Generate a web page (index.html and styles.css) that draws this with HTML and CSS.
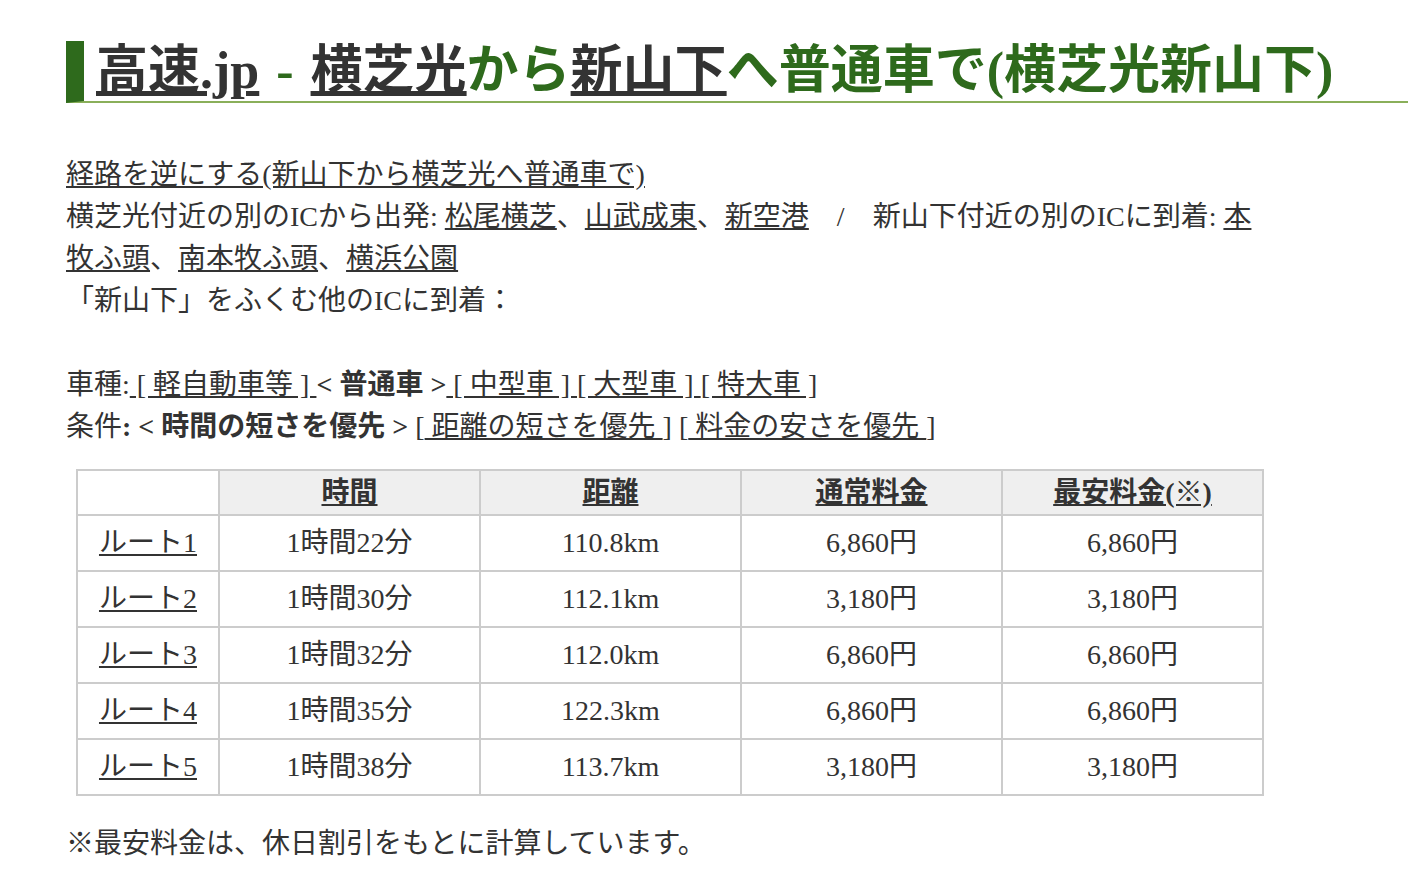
FILE: index.html
```html
<!DOCTYPE html>
<html lang="ja">
<head>
<meta charset="utf-8">
<title>高速.jp - 横芝光から新山下へ普通車で</title>
<link rel="stylesheet" href="styles.css">
</head>
<body>
<div class="page">
  <h1 class="title"><a href="#">高速.jp</a> - <a href="#">横芝光</a>から<a href="#">新山下</a>へ普通車で(横芝光新山下)</h1>
  <div class="content">
    <p class="lines">
      <a href="#">経路を逆にする(新山下から横芝光へ普通車で)</a><br>
      横芝光付近の別のICから出発: <a href="#">松尾横芝</a>、<a href="#">山武成東</a>、<a href="#">新空港</a>　/　新山下付近の別のICに到着: <a href="#">本牧ふ頭</a>、<a href="#">南本牧ふ頭</a>、<a href="#">横浜公園</a><br>
      「新山下」をふくむ他のICに到着：<br>
      <br>
      車種:<a href="#"> [ 軽自動車等 ] </a><b>&lt; 普通車 &gt;</b><a href="#"> [ 中型車 ] </a><a href="#"> [ 大型車 ] </a><a href="#"> [ 特大車 ]</a><br>
      条件<b>: &lt; 時間の短さを優先 &gt;</b> [<a href="#"> 距離の短さを優先 </a>] [<a href="#"> 料金の安さを優先 </a>]
    </p>
    <table class="routes">
      <colgroup>
        <col class="c-route"><col class="c-data"><col class="c-data"><col class="c-data"><col class="c-data">
      </colgroup>
      <thead>
        <tr><th class="blank"></th><th><a href="#">時間</a></th><th><a href="#">距離</a></th><th><a href="#">通常料金</a></th><th><a href="#">最安料金(※)</a></th></tr>
      </thead>
      <tbody>
        <tr><td><a href="#">ルート1</a></td><td>1時間22分</td><td>110.8km</td><td>6,860円</td><td>6,860円</td></tr>
        <tr><td><a href="#">ルート2</a></td><td>1時間30分</td><td>112.1km</td><td>3,180円</td><td>3,180円</td></tr>
        <tr><td><a href="#">ルート3</a></td><td>1時間32分</td><td>112.0km</td><td>6,860円</td><td>6,860円</td></tr>
        <tr><td><a href="#">ルート4</a></td><td>1時間35分</td><td>122.3km</td><td>6,860円</td><td>6,860円</td></tr>
        <tr><td><a href="#">ルート5</a></td><td>1時間38分</td><td>113.7km</td><td>3,180円</td><td>3,180円</td></tr>
      </tbody>
    </table>
    <p class="note">※最安料金は、休日割引をもとに計算しています。</p>
  </div>
</div>
</body>
</html>
```

FILE: styles.css
```css
html, body {
  margin: 0;
  padding: 0;
  background: #ffffff;
}

body {
  font-family: "Liberation Serif", "Noto Sans CJK JP", serif;
  color: #333333;
  font-size: 28px;
}

a {
  color: #333333;
  text-decoration: underline;
}

.page {
  padding: 41px 0 0 66px;
}

.title {
  margin: 0;
  height: 60px;
  line-height: 60px;
  font-size: 52px;
  font-weight: bold;
  color: #2e6a1c;
  border-left: 18px solid #2e6a1c;
  border-bottom: 2px solid #8aaf5a;
  padding-left: 12px;
  white-space: nowrap;
  overflow: hidden;
  word-spacing: 4px;
}

.title a {
  color: #333333;
}

.content {
  width: 1200px;
}

.lines {
  margin: 51px 0 0 0;
  line-height: 42px;
}

.lines b {
  font-weight: bold;
}

.routes {
  margin: 21px 0 0 10px;
  width: 1186px;
  border-collapse: collapse;
  table-layout: fixed;
}

.c-route {
  width: 142px;
}

.c-data {
  width: 261px;
}

.routes th,
.routes td {
  border: 2px solid #cccccc;
  text-align: center;
  padding: 0;
  line-height: 36px;
}

.routes th {
  background: #efefef;
  height: 43px;
  font-weight: bold;
}

.routes th.blank {
  background: #ffffff;
}

.routes td {
  height: 54px;
}

.note {
  margin: 27px 0 0 0;
  line-height: 42px;
}
```
